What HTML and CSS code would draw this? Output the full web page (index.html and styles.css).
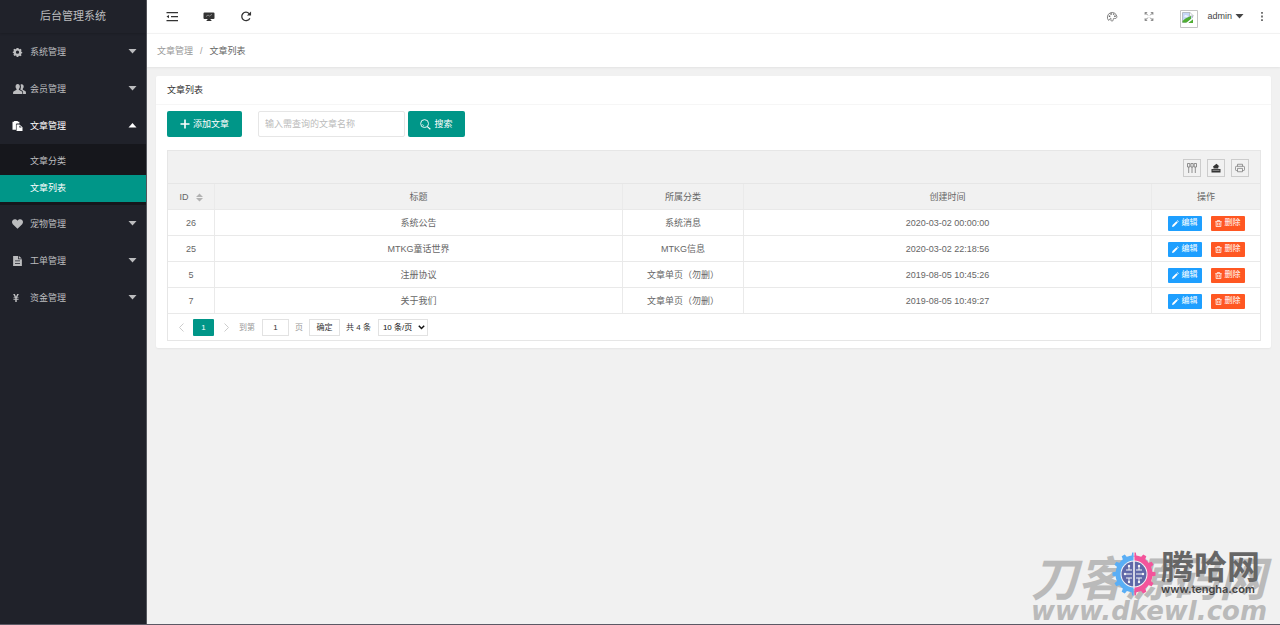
FILE: index.html
```html
<!DOCTYPE html>
<html lang="zh-CN">
<head>
<meta charset="utf-8">
<meta name="viewport" content="width=device-width, initial-scale=1">
<title>后台管理系统</title>
<link rel="stylesheet" href="styles.css">
</head>
<body>
<svg class="sprite" aria-hidden="true">
  <symbol id="i-down" viewBox="0 0 8 5"><path d="M0 0h8L4 4.5z"/></symbol>
  <symbol id="i-up" viewBox="0 0 8 5"><path d="M0 4.5h8L4 0z"/></symbol>
  <symbol id="i-gear" viewBox="0 0 16 16"><path fill-rule="evenodd" d="M6.400 1.500h3.200l.4 1.500 1.200.6 1.600-.9 1.800 2-.9 1.600.4 1.100 1.400.4v2l-1.400.5-.5 1.200.9 1.600-2 1.800-1.600-.9-1.200.5-.4 1.500H6.600L6.200 14l-1.300-.5-1.600.8-1.900-1.800.9-1.600-.5-1.200L.500 9.700V7.600l1.300-.4.4-1.200-.9-1.600 1.900-1.800 1.600.9L6 3zM8 5.600a2.600 2.600 0 1 0 0 5.200 2.600 2.600 0 0 0 0-5.200z"/></symbol>
  <symbol id="i-users" viewBox="0 0 18 14"><path d="M6.500 0c2 0 3 1.500 3 3.500 0 1.500-.6 2.700-1.400 3.400v1.300l3.700 2c.8.4 1.200 1 1.200 2V14H0v-1.800c0-1 .4-1.600 1.200-2l3.700-2V6.900C4.100 6.200 3.500 5 3.500 3.500 3.500 1.500 4.500 0 6.500 0z"/><path d="M10.400 1c.5-.5 1.100-.7 1.800-.7 1.800 0 2.700 1.400 2.700 3.200 0 1.400-.5 2.500-1.300 3.200v1.200l3.300 1.900c.8.4 1.100.9 1.100 1.800V14h-4v-2c0-1.400-.6-2.300-1.700-2.900L10 7.800c.6-1 1-2.500 1-4 0-1-.2-2-.6-2.800z"/></symbol>
  <symbol id="i-paste" viewBox="0 0 16 16"><path d="M0 1h2.500V0h6v1H11v3H6.500L5.500 5v9H0z"/><path fill-rule="evenodd" d="M6.500 5.500H11L16 10v6H6.500zM11 7v3.500h3.700z"/></symbol>
  <symbol id="i-heart" viewBox="0 0 16 14"><path d="M8 14 1.200 7.300C-.5 5.500-.3 2.600 1.300 1.100 3-.5 6-.3 8 2.200c2-2.500 5-2.700 6.700-1.100 1.600 1.500 1.800 4.400.1 6.200z"/></symbol>
  <symbol id="i-file" viewBox="0 0 14 16"><path fill-rule="evenodd" d="M0 0h8v5h6v11H0zm3 7v1.500h8V7zm0 4v1.500h8V11z"/><path d="M9.200 0l4.800 4H9.200z"/></symbol>
  <symbol id="i-yen" viewBox="0 0 12 14"><path d="M1 0h3l2 4.600L8 0h3L8 6h2.500v1.500H7.300v1.200h3.200v1.500H7.300V14H4.700v-3.800H1.500V8.700h3.200V7.500H1.500V6H4z"/></symbol>
  <symbol id="i-menu" viewBox="0 0 12 10"><path d="M.500.5H12v1.200H.5zM5 4.500h7v1.200H5zM.5 8.500H12v1.200H.5zM.500 5.100 3 3.500v3.200z"/></symbol>
  <symbol id="i-board" viewBox="0 0 12 10"><path d="M1.500 1h9q1 0 1 1v4.500q0 1-1 1H7.600V8.600h.8v.8H3.600v-.8h.8V7.500H1.500q-1 0-1-1V2q0-1 1-1z"/><path d="M3 5l2-1.500 1.500 1L9 2.800" fill="none" stroke="#999" stroke-width=".8"/></symbol>
  <symbol id="i-refresh" viewBox="0 0 12 12"><path d="M10.200 7.800A4.600 4.600 0 1 1 9.400 2.800L10.500 4" fill="none" stroke="currentColor" stroke-width="1.400"/><path d="M11.500.5v4.500H7z"/></symbol>
  <symbol id="i-palette" viewBox="0 0 12 12"><path d="M2.200 10.200A5.200 5.200 0 1 1 11.300 6c0 2-1.300 2.400-2.500 2.100-1.100-.2-1.800.4-1.400 1.300.3.900-.6 1.500-1.700 1.400-1.100 0-1.300-.9-.8-1.900.3-.9-.4-1.300-1-.6-.4.7-.8 1.700-1.700 1.900z" fill="none" stroke="currentColor" stroke-width=".9"/><path d="M2.500 5h1.600v1.600H2.500zM4.200 2.500h1.600v1.600H4.200zM7 2.600h1.500v1.500H7zM8.400 5H10v1.500H8.400z"/></symbol>
  <symbol id="i-full" viewBox="0 0 10 10"><path d="M.7 3V.7H3M.7.7l3 3M7 .7h2.300V3M9.300.7l-3 3M.7 7v2.300H3M.7 9.300l3-3M9.300 7v2.300H7M9.300 9.300l-3-3" fill="none" stroke="currentColor" stroke-width=".9"/></symbol>
  <symbol id="i-more" viewBox="0 0 4 10"><path d="M1 0h2v2H1zM1 4h2v2H1zM1 8h2v2H1z"/></symbol>
  <symbol id="i-plus" viewBox="0 0 10 10"><path d="M4.200.5h1.600v3.700h3.700v1.600H5.800v3.700H4.200V5.800H.5V4.200h3.700z"/></symbol>
  <symbol id="i-search" viewBox="0 0 12 12"><circle cx="5" cy="5" r="4.300" fill="none" stroke="currentColor"/><path d="M8 8.300 11.300 11.200" stroke="currentColor" stroke-width="1.300"/><path d="M2.600 5.500Q3 7.300 4.700 7.600" fill="none" stroke="currentColor" stroke-width=".6"/></symbol>
  <symbol id="i-pencil" viewBox="0 0 8 8"><path d="M0 8l.6-2.200L5.100 1.400 6.600 2.900 2.200 7.400zM5.600.9 6.400.2 7.800 1.600l-.7.800z"/></symbol>
  <symbol id="i-trash" viewBox="0 0 8 8"><path d="M.3 1.900h7.400M2.700 1.700V.5h2.600v1.200M1.300 2v5.500h5.400V2M3.100 3.300v3M4.900 3.300v3" fill="none" stroke="currentColor" stroke-width=".9"/></symbol>
  <symbol id="i-cols" viewBox="0 0 10 10"><path d="M.5.500h2.300v3.500H.5zM3.900.500h2.300v3.500H3.900zM7.200.500h2.300v3.500H7.200zM1.700 4v6M5 4v6M8.300 4v6" fill="none" stroke="currentColor" stroke-width=".8"/></symbol>
  <symbol id="i-export" viewBox="0 0 10 10"><path d="M.5 6h9v3.500h-9zM2.500 5.500V4.500L2 3.500 5.500.800 8.500 3.500H7.300v2z"/><path d="M1.500 7.300h7" stroke="#f2f2f2" stroke-width=".5"/></symbol>
  <symbol id="i-print" viewBox="0 0 12 10"><path d="M3 3V.5h6V3M3 8H1.700Q.6 8 .6 7V4q0-1 1-1h8.800q1 0 1 1v3q0 1-1 1H9M3 5.500h6v4H3z" fill="none" stroke="currentColor" stroke-width=".9"/></symbol>
</svg>

<div class="app">
  <aside class="side">
    <h1 class="brand">后台管理系统</h1>
    <nav class="nav">
      <button class="nav-item"><svg class="nav-icon"><use href="#i-gear"/></svg><span>系统管理</span><svg class="caret"><use href="#i-down"/></svg></button>
      <button class="nav-item"><svg class="nav-icon nav-icon-wide"><use href="#i-users"/></svg><span>会员管理</span><svg class="caret"><use href="#i-down"/></svg></button>
      <button class="nav-item open" aria-expanded="true"><svg class="nav-icon"><use href="#i-paste"/></svg><span>文章管理</span><svg class="caret"><use href="#i-up"/></svg></button>
      <div class="subnav">
        <a class="sub-item" href="#">文章分类</a>
        <a class="sub-item current" href="#" aria-current="page">文章列表</a>
      </div>
      <button class="nav-item"><svg class="nav-icon"><use href="#i-heart"/></svg><span>宠物管理</span><svg class="caret"><use href="#i-down"/></svg></button>
      <button class="nav-item"><svg class="nav-icon"><use href="#i-file"/></svg><span>工单管理</span><svg class="caret"><use href="#i-down"/></svg></button>
      <button class="nav-item"><svg class="nav-icon nav-icon-small"><use href="#i-yen"/></svg><span>资金管理</span><svg class="caret"><use href="#i-down"/></svg></button>
    </nav>
  </aside>

  <main class="main">
    <header class="topbar">
      <div class="tools-left">
        <button class="icon-btn" aria-label="收起菜单"><svg class="top-icon"><use href="#i-menu"/></svg></button>
        <button class="icon-btn" aria-label="前台"><svg class="top-icon"><use href="#i-board"/></svg></button>
        <button class="icon-btn" aria-label="刷新"><svg class="top-icon"><use href="#i-refresh"/></svg></button>
      </div>
      <div class="tools-right">
        <button class="icon-btn" aria-label="主题"><svg class="top-icon"><use href="#i-palette"/></svg></button>
        <button class="icon-btn" aria-label="全屏"><svg class="top-icon top-icon-small"><use href="#i-full"/></svg></button>
        <button class="user">
          <svg class="avatar" viewBox="0 0 18 18"><path d="M.5.500h17v17H.5z" fill="#fff" stroke="#c4c4c4"/><path d="M2.500 2.500h7l3 3v7h-10z" fill="#c5d6f6" stroke="#a9b0b8" stroke-width=".8"/><path d="M9.500 2v4h4z" fill="#fff" stroke="#a9b0b8" stroke-width=".7"/><path d="M4 6.500q1-2 2.500-1 1.500 0 1.500 1.300z" fill="#fff"/><path d="M2.500 12.500V11l3-2.500 3-1.500 2.500-1v3L7 12.500z" fill="#4fae32"/><path d="M8 13l5-4v4z" fill="#4fae32"/><path d="M6.500 13.500 13.500 8" stroke="#fff" stroke-width="1.300"/></svg>
          <span>admin</span><svg class="caret"><use href="#i-down"/></svg>
        </button>
        <button class="icon-btn more" aria-label="更多"><svg class="top-icon top-icon-small"><use href="#i-more"/></svg></button>
      </div>
    </header>

    <nav class="crumbs" aria-label="面包屑"><a href="#">文章管理</a><i>/</i><span>文章列表</span></nav>

    <section class="card">
      <h2 class="card-title">文章列表</h2>
      <div class="card-body">
        <form class="filters">
          <button type="button" class="btn btn-add"><svg class="btn-icon"><use href="#i-plus"/></svg>添加文章</button>
          <input class="query" type="text" placeholder="输入需查询的文章名称" aria-label="文章名称">
          <button type="button" class="btn btn-search"><svg class="btn-icon btn-icon-big"><use href="#i-search"/></svg>搜索</button>
        </form>

        <div class="grid">
          <div class="grid-tools">
            <button class="tool" aria-label="筛选列"><svg class="tool-icon"><use href="#i-cols"/></svg></button>
            <button class="tool tool-dark" aria-label="导出"><svg class="tool-icon"><use href="#i-export"/></svg></button>
            <button class="tool" aria-label="打印"><svg class="tool-icon"><use href="#i-print"/></svg></button>
          </div>
          <table class="table">
            <colgroup><col class="c-id"><col><col class="c-type"><col><col class="c-act"></colgroup>
            <thead><tr>
              <th>ID<svg class="sort" viewBox="0 0 7 9"><path d="M0 4h7L3.500.5zM0 5h7L3.500 8.500z"/></svg></th>
              <th>标题</th><th>所属分类</th><th>创建时间</th><th>操作</th>
            </tr></thead>
            <tbody>
              <tr><td>26</td><td>系统公告</td><td>系统消息</td><td>2020-03-02 00:00:00</td><td><div class="acts"><button class="mini edit"><svg class="mini-icon"><use href="#i-pencil"/></svg>编辑</button><button class="mini del"><svg class="mini-icon"><use href="#i-trash"/></svg>删除</button></div></td></tr>
              <tr><td>25</td><td>MTKG童话世界</td><td>MTKG信息</td><td>2020-03-02 22:18:56</td><td><div class="acts"><button class="mini edit"><svg class="mini-icon"><use href="#i-pencil"/></svg>编辑</button><button class="mini del"><svg class="mini-icon"><use href="#i-trash"/></svg>删除</button></div></td></tr>
              <tr><td>5</td><td>注册协议</td><td>文章单页（勿删）</td><td>2019-08-05 10:45:26</td><td><div class="acts"><button class="mini edit"><svg class="mini-icon"><use href="#i-pencil"/></svg>编辑</button><button class="mini del"><svg class="mini-icon"><use href="#i-trash"/></svg>删除</button></div></td></tr>
              <tr><td>7</td><td>关于我们</td><td>文章单页（勿删）</td><td>2019-08-05 10:49:27</td><td><div class="acts"><button class="mini edit"><svg class="mini-icon"><use href="#i-pencil"/></svg>编辑</button><button class="mini del"><svg class="mini-icon"><use href="#i-trash"/></svg>删除</button></div></td></tr>
            </tbody>
          </table>
          <div class="pager">
            <button class="page-arrow" aria-label="上一页"><svg class="arrow" viewBox="0 0 5 9"><path d="M4.500.5l-4 4 4 4"/></svg></button>
            <button class="page-now">1</button>
            <button class="page-arrow" aria-label="下一页"><svg class="arrow" viewBox="0 0 5 9"><path d="M.5.500l4 4-4 4"/></svg></button>
            <label class="jump">到第<input class="page-input" type="text" value="1">页</label>
            <button class="page-ok">确定</button>
            <span class="total">共 4 条</span>
            <span class="size-wrap"><select class="page-size" aria-label="每页条数"><option>10 条/页</option></select><svg class="size-arrow" viewBox="0 0 7 5"><path d="M.8.8l2.700 2.700L6.200.8"/></svg></span>
          </div>
        </div>
      </div>
    </section>
  </main>
</div>

<div class="mark mark-back" aria-hidden="true"><span class="back-name">刀客源码网</span><span class="back-url">www.dkewl.com</span></div>
<div class="mark mark-front" aria-hidden="true">
  <svg class="gear" viewBox="-22 -22 44 44">
    <defs><clipPath id="lh"><path d="M-22-22h21.500v44H-22z"/></clipPath><clipPath id="rh"><path d="M.5-22H22v44H.5z"/></clipPath>
    <g id="cog"><circle r="16" fill="none" stroke="currentColor" stroke-width="5"/><g id="t3"><path id="t1" d="M-2.600-17-1.800-21.500h3.600L2.600-17zM-2.600 17-1.800 21.500h3.600L2.600 17z"/><use href="#t1" transform="rotate(30)"/><use href="#t1" transform="rotate(60)"/></g><use href="#t3" transform="rotate(90)"/></g></defs>
    <circle r="15" fill="#f4f4f6"/>
    <g clip-path="url(#lh)"><use href="#cog" color="#5aaef5" fill="#5aaef5"/></g>
    <g clip-path="url(#rh)"><use href="#cog" color="#f3549b" fill="#f3549b"/></g>
    <circle r="12.500" fill="#5f68a8"/>
    <path d="M0-13v26" stroke="#f4f4f6" stroke-width="1.600"/>
    <path d="M-9 0h7M-8-4h3V-8M-8 4h3v4M-5-4h3M-5 4h3M2 0h7M2-4h6M5-4v-4M2 4h6M5 4v4" fill="none" stroke="#f4f4f6" stroke-width="1"/>
    <g fill="#f4f4f6"><circle cx="-9" r="1.200"/><circle cx="-5" cy="-8" r="1.200"/><circle cx="-5" cy="8" r="1.200"/><circle cx="9" r="1.200"/><circle cx="5" cy="-8" r="1.200"/><circle cx="5" cy="8" r="1.200"/></g>
  </svg>
  <div class="front-text"><span class="front-name">腾哈网</span><span class="front-url">www.tengha.com</span></div>
</div>
</body>
</html>
```

FILE: styles.css
```css
* { box-sizing: border-box; }
body {
  margin: 0;
  background: #f1f1f1;
  color: #666;
  font: 9px/14px "Liberation Sans", "Noto Sans CJK SC", sans-serif;
}
button, input, select { margin: 0; font: inherit; color: inherit; }
button { padding: 0; border: 0; background: none; cursor: pointer; }
a { color: inherit; text-decoration: none; }
svg { display: block; flex: none; fill: currentColor; }
.sprite { position: absolute; width: 0; height: 0; }

.app { display: flex; min-height: 100vh; border-bottom: 1px solid #5c5965; }
.side { flex: none; width: 147px; background: #20222a; color: #bcbdbf; border-right: 1px solid #55575d; }
.brand { margin: 0; height: 33px; text-align: center; font-size: 11px; line-height: 32px; font-weight: 400; box-shadow: 0 1px 2px rgba(0, 0, 0, .15); }
.nav { display: flex; flex-direction: column; }
.nav-item { display: flex; align-items: center; height: 37px; padding: 0 9px 0 12px; text-align: left; }
.nav-item span { flex: 1; }
.nav-icon { width: 11px; height: 10px; margin-right: 7px; }
.nav-icon-wide { width: 13px; margin: 0 4px 0 1px; }
.nav-icon-small { width: 8px; height: 8px; margin-right: 10px; }
.caret { width: 9px; height: 5px; }
.open { color: #fff; }
.subnav { display: flex; flex-direction: column; padding: 4px 0 3px; background: #16171c; }
.sub-item { height: 27px; padding-left: 30px; line-height: 26px; }
.current { background: #009688; color: #fff; }

.main { flex: 1; min-width: 0; }
.topbar { display: flex; justify-content: space-between; height: 33px; background: #fff; color: #333; }
.tools-left, .tools-right { display: flex; align-items: center; }
.tools-left { padding-left: 6px; }
.icon-btn { display: flex; align-items: center; justify-content: center; width: 37px; height: 32px; }
.top-icon { width: 12px; height: 11px; }
.top-icon-small { width: 10px; height: 9px; }
.tools-right { color: #666; }
.user { display: flex; align-items: center; margin-left: 13px; color: #444; }
.user span { margin: 0 3px 2px 9px; }
.avatar { width: 18px; height: 18px; margin-top: 4px; }
.more { width: 36px; }
.crumbs { display: flex; align-items: center; height: 34px; padding-left: 10px; background: #fff; border-top: 1px solid #f2f2f2; box-shadow: 0 1px 2px rgba(0, 0, 0, .06); color: #999; }
.crumbs i { margin: 0 7px; font-style: normal; }
.crumbs span { color: #666; }

.card { margin: 9px; background: #fff; border-radius: 2px; box-shadow: 0 1px 2px rgba(0, 0, 0, .05); }
.card-title { margin: 0; height: 29px; padding-left: 11px; border-bottom: 1px solid #f6f6f6; font-size: 9px; line-height: 28px; font-weight: 400; color: #333; }
.card-body { padding: 6px 10px 7px 11px; }
.filters { display: flex; height: 26px; }
.btn { display: flex; align-items: center; justify-content: center; gap: 3px; background: #009688; color: #fff; border-radius: 2px; }
.btn-add { width: 75px; margin-right: 16px; }
.btn-search { width: 57px; }
.btn-icon { width: 10px; height: 10px; }
.btn-icon-big { width: 11px; height: 11px; }
.query { width: 147px; margin-right: 3px; padding: 0 6px; border: 1px solid #e6e6e6; border-radius: 2px; outline: 0; }
.query::placeholder { color: #bbb; }

.grid { margin-top: 13px; border: 1px solid #e6e6e6; }
.grid-tools { display: flex; justify-content: flex-end; align-items: center; gap: 6px; height: 33px; padding: 2px 11px 0 0; background: #f1f1f1; border-bottom: 1px solid #e6e6e6; }
.tool { display: flex; align-items: center; justify-content: center; width: 18px; height: 18px; border: 1px solid #ccc; color: #777; }
.tool-dark { color: #333; }
.tool-icon { width: 10px; height: 10px; }
.table { width: 100%; table-layout: fixed; border-collapse: separate; border-spacing: 0; }
.c-id { width: 47px; }
.c-type { width: 121px; }
.c-act { width: 108px; }
.table th, .table td { height: 26px; padding: 0; text-align: center; font-weight: 400; border-right: 1px solid #eaeaea; border-bottom: 1px solid #e9e9e9; }
.table th { background: #f1f1f1; }
.table th:last-child, .table td:last-child { border-right: 0; }
.sort { display: inline-block; width: 7px; height: 9px; margin-left: 7px; vertical-align: -2px; fill: #b2b2b2; }
.acts { display: flex; justify-content: center; gap: 9px; padding-top: 1px; }
.mini { display: flex; align-items: center; justify-content: center; gap: 3px; width: 34px; height: 15px; border-radius: 1px; color: #fff; font-size: 8px; }
.mini-icon { width: 7px; height: 7px; }
.edit { background: #1e9fff; }
.del { background: #ff5722; }
.pager { display: flex; align-items: center; height: 26px; padding: 1px 0 0 2px; color: #333; font-size: 8px; }
.page-arrow { display: flex; justify-content: center; width: 22px; }
.arrow { width: 5px; height: 9px; fill: none; stroke: #ccc; }
.page-now { width: 21px; height: 17px; margin-left: 1px; border-radius: 1px; background: #009688; color: #fff; }
.page-now + .page-arrow { width: 25px; }
.jump { display: flex; align-items: center; color: #999; }
.page-input { width: 27px; height: 17px; margin: 0 6px 0 7px; padding: 0; border: 1px solid #e2e2e2; text-align: center; color: #333; }
.page-ok { width: 31px; height: 17px; margin: 0 6px; border: 1px solid #e2e2e2; }
.size-wrap { position: relative; margin-left: 7px; }
.page-size { display: block; appearance: none; width: 50px; height: 17px; padding: 0 4px; border: 1px solid #e2e2e2; border-radius: 0; background: #fff; color: #111; }
.size-arrow { position: absolute; top: 6px; right: 3px; width: 7px; height: 5px; fill: none; stroke: #111; stroke-width: 1.5; pointer-events: none; }

.mark { position: absolute; display: flex; pointer-events: none; white-space: nowrap; }
.mark-back { right: 13px; bottom: 1px; flex-direction: column; color: #bababa; font-style: italic; font-weight: 700; }
.back-name { font-size: 47px; line-height: 36px; }
.back-url { font-family: "DejaVu Sans", sans-serif; font-size: 26px; line-height: 26px; }
.mark-front { right: 20px; bottom: 28px; align-items: center; gap: 5px; }
.gear { width: 44px; height: 44px; margin-bottom: 1px; }
.front-text { display: flex; flex-direction: column; }
.front-name { font-size: 33px; line-height: 28px; font-weight: 700; color: #666; }
.front-url { font-family: Inter, sans-serif; font-size: 11px; line-height: 14px; font-weight: 600; color: #444; }
```
